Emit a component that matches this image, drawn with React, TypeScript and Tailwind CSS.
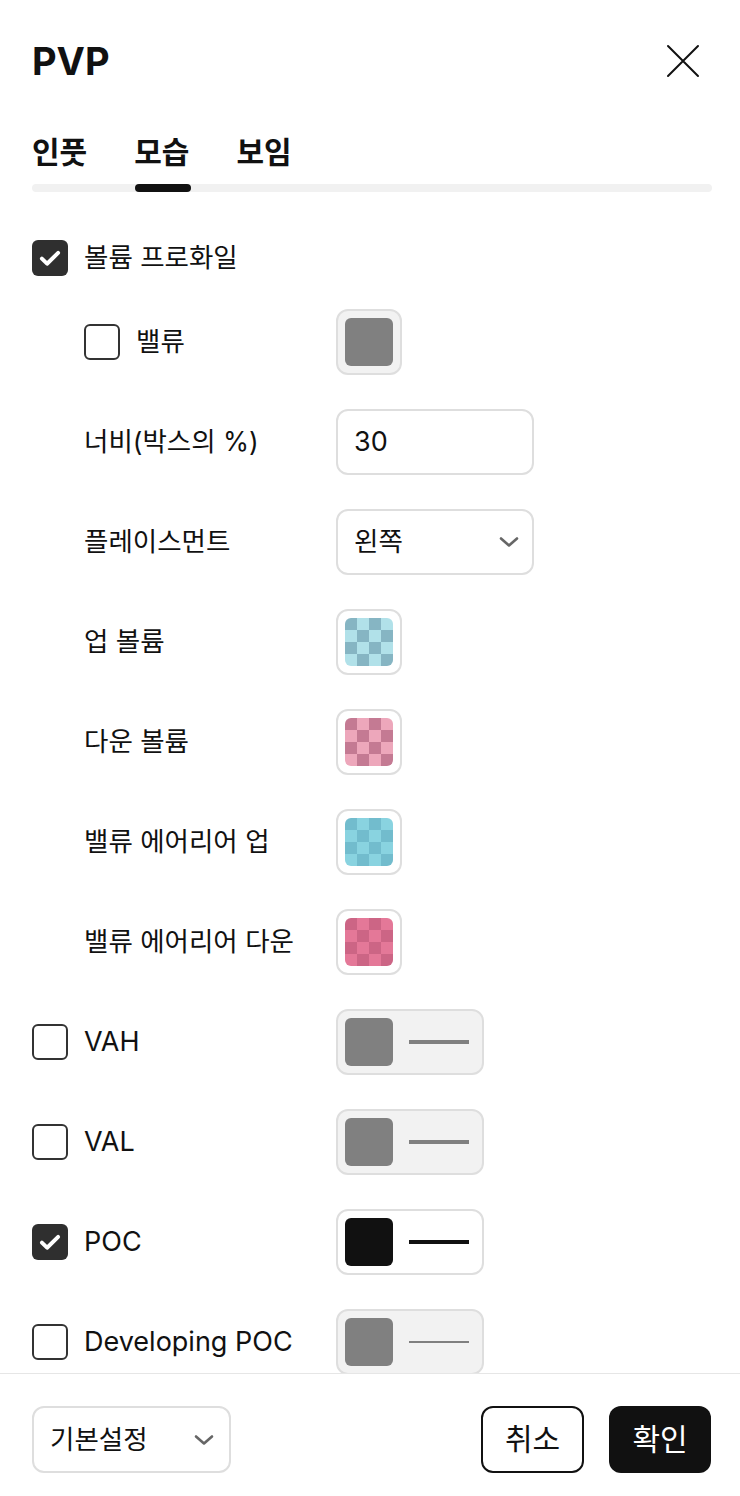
import { ReactNode } from "react";

const font = { fontFamily: 'Inter, "Noto Sans CJK KR", sans-serif' };

const Check = ({ checked }: { checked: boolean }) =>
  checked ? (
    <div className="w-9 h-9 rounded-md bg-[#2f2f2f] flex items-center justify-center shrink-0">
      <svg width="26" height="26" viewBox="0 0 24 24" fill="none">
        <path d="M4.5 12.5l4.8 4.8L19.5 7.2" stroke="#fff" strokeWidth="3.6" strokeLinecap="round" strokeLinejoin="round" />
      </svg>
    </div>
  ) : (
    <div className="w-9 h-9 rounded-md border-2 border-[#333] bg-white shrink-0" />
  );

const Chevron = () => (
  <svg width="22" height="14" viewBox="0 0 22 14" fill="none">
    <path d="M3 3.5l8 7 8-7" stroke="#666" strokeWidth="2.6" strokeLinecap="round" strokeLinejoin="round" />
  </svg>
);

const Swatch = ({ inner, disabled }: { inner: ReactNode; disabled?: boolean }) => (
  <div
    className={`w-[66px] h-[66px] rounded-xl border-2 border-[#dedede] p-[7px] ${disabled ? "bg-[#f2f2f2]" : "bg-white"}`}
  >
    <div className="w-12 h-12 rounded-md overflow-hidden">{inner}</div>
  </div>
);

const Checker = ({ a, b }: { a: string; b: string }) => (
  <div className="grid grid-cols-4 grid-rows-4 w-12 h-12">
    {Array.from({ length: 16 }).map((_, i) => {
      const r = Math.floor(i / 4);
      const c = i % 4;
      return <div key={i} style={{ background: (r + c) % 2 === 0 ? a : b }} />;
    })}
  </div>
);

const LineBox = ({ color, thick, disabled }: { color: string; thick: number; disabled?: boolean }) => (
  <div
    className={`w-[148px] h-[66px] rounded-xl border-2 border-[#dedede] p-[7px] flex items-center ${disabled ? "bg-[#f2f2f2]" : "bg-white"}`}
  >
    <div className="w-12 h-12 rounded-md" style={{ background: color }} />
    <div className="ml-4 w-[60px]" style={{ height: thick, background: color }} />
  </div>
);

const Row = ({ label, indent, check, control, latin, mt = "mt-[34px]" }: {
  label: string;
  indent?: boolean;
  check?: boolean;
  control?: ReactNode;
  latin?: boolean;
  mt?: string;
}) => (
  <div className={`flex items-center h-[66px] ${mt}`}>
    <div className={`w-[304px] flex items-center gap-4 ${indent ? "pl-[52px]" : ""}`}>
      {check !== undefined && <Check checked={check} />}
      <span className={latin ? "text-[27px]" : "text-[26.5px]"}>{label}</span>
    </div>
    {control}
  </div>
);

export default function App() {
  return (
    <div className="h-[1496px] w-full bg-white text-[#111] flex flex-col overflow-hidden" style={font}>
      <div className="pl-8 pr-[40px] pt-[36px] h-[86px] flex justify-between items-start">
        <h1 className="text-[38px] font-bold leading-[50px]">PVP</h1>
        <svg width="34" height="34" viewBox="0 0 34 34" className="mt-2" fill="none">
          <path d="M2 2l30 30M32 2L2 32" stroke="#111" strokeWidth="2" strokeLinecap="round" />
        </svg>
      </div>

      <div className="pl-8 pr-[28px] mt-[46px]">
        <div className="flex gap-[47px] text-[30px] font-bold leading-[40px]">
          <span>인풋</span>
          <span>모습</span>
          <span>보임</span>
        </div>
        <div className="mt-3 h-2 rounded-full bg-[#f1f1f1] relative">
          <div className="absolute left-[103px] top-0 h-2 w-[56px] rounded-full bg-[#111]" />
        </div>
      </div>

      <div className="flex-1 overflow-hidden pl-8 pr-[28px] pt-[48px]">
        <div className="flex items-center gap-4 h-9">
          <Check checked />
          <span className="text-[26.5px]">볼륨 프로화일</span>
        </div>
        <Row
          mt="mt-[33px]"
          label="밸류"
          indent
          check={false}
          control={<Swatch disabled inner={<div className="w-12 h-12 bg-[#808080]" />} />}
        />
        <Row
          label="너비(박스의 %)"
          indent
          control={
            <div className="w-[198px] h-[66px] rounded-xl border-2 border-[#dedede] px-4 flex items-center text-[27px]">
              30
            </div>
          }
        />
        <Row
          label="플레이스먼트"
          indent
          control={
            <div className="w-[198px] h-[66px] rounded-xl border-2 border-[#dedede] pl-4 pr-3 flex items-center justify-between text-[26.5px]">
              <span>왼쪽</span>
              <Chevron />
            </div>
          }
        />
        <Row label="업 볼륨" indent control={<Swatch inner={<Checker a="#86b5c3" b="#b1e1e9" />} />} />
        <Row label="다운 볼륨" indent control={<Swatch inner={<Checker a="#c47a93" b="#eda7bb" />} />} />
        <Row label="밸류 에어리어 업" indent control={<Swatch inner={<Checker a="#72bccd" b="#89d3e0" />} />} />
        <Row label="밸류 에어리어 다운" indent control={<Swatch inner={<Checker a="#cc6585" b="#e47898" />} />} />
        <Row label="VAH" latin check={false} control={<LineBox disabled color="#808080" thick={4} />} />
        <Row label="VAL" latin check={false} control={<LineBox disabled color="#808080" thick={4} />} />
        <Row label="POC" latin check control={<LineBox color="#111111" thick={4} />} />
        <Row label="Developing POC" latin check={false} control={<LineBox disabled color="#808080" thick={2} />} />
      </div>

      <div className="h-[123px] shrink-0 border-t border-[#e6e6e6] pl-8 pr-[29px] pt-8 flex justify-between items-start">
        <div className="w-[199px] h-[67px] rounded-xl border-2 border-[#dedede] pl-4 pr-[14px] flex items-center justify-between text-[26.5px]">
          <span>기본설정</span>
          <Chevron />
        </div>
        <div className="flex gap-[25px]">
          <button className="w-[103px] h-[67px] rounded-xl border-2 border-[#111] bg-white text-[30px]">취소</button>
          <button className="w-[102px] h-[67px] rounded-xl bg-[#111] text-white text-[30px]">확인</button>
        </div>
      </div>
    </div>
  );
}
